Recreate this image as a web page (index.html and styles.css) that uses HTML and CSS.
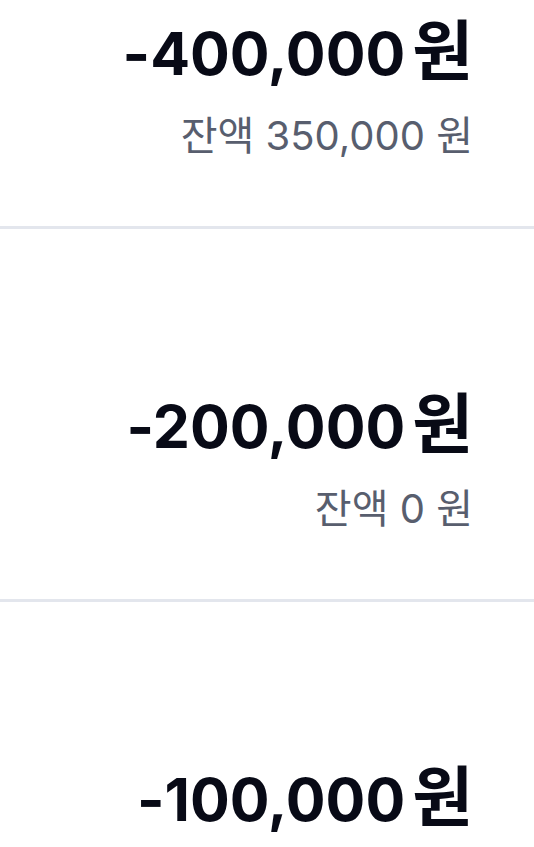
FILE: index.html
```html
<!DOCTYPE html>
<html lang="ko">
<head>
<meta charset="utf-8">
<link rel="stylesheet" href="styles.css">
</head>
<body>
<ul class="list">
  <li class="item">
    <div class="amount">-400,000<span class="unit">원</span></div>
    <div class="balance">잔액 350,000 원</div>
  </li>
  <li class="item">
    <div class="amount">-200,000<span class="unit">원</span></div>
    <div class="balance">잔액 0 원</div>
  </li>
  <li class="item">
    <div class="amount">-100,000<span class="unit">원</span></div>
    <div class="balance">잔액 -100,000 원</div>
  </li>
</ul>
</body>
</html>
```
FILE: styles.css
```css
html, body {
  margin: 0;
  padding: 0;
  background: #ffffff;
  overflow: hidden;
}
body {
  font-family: Inter, "Noto Sans CJK KR", sans-serif;
}
.list {
  list-style: none;
  margin: -144px 0 0 0;
  padding: 0;
}
.item {
  padding: 159px 61px 66px;
  border-bottom: 3px solid #e3e6ed;
  text-align: right;
}
.amount {
  font-size: 59px;
  line-height: 72px;
  font-weight: 700;
  color: #080a16;
  letter-spacing: 0;
}
.unit {
  font-size: 1.12em;
  margin-left: 7px;
}
.balance {
  margin-top: 22px;
  font-size: 40px;
  line-height: 48px;
  color: #585e6e;
}
```
